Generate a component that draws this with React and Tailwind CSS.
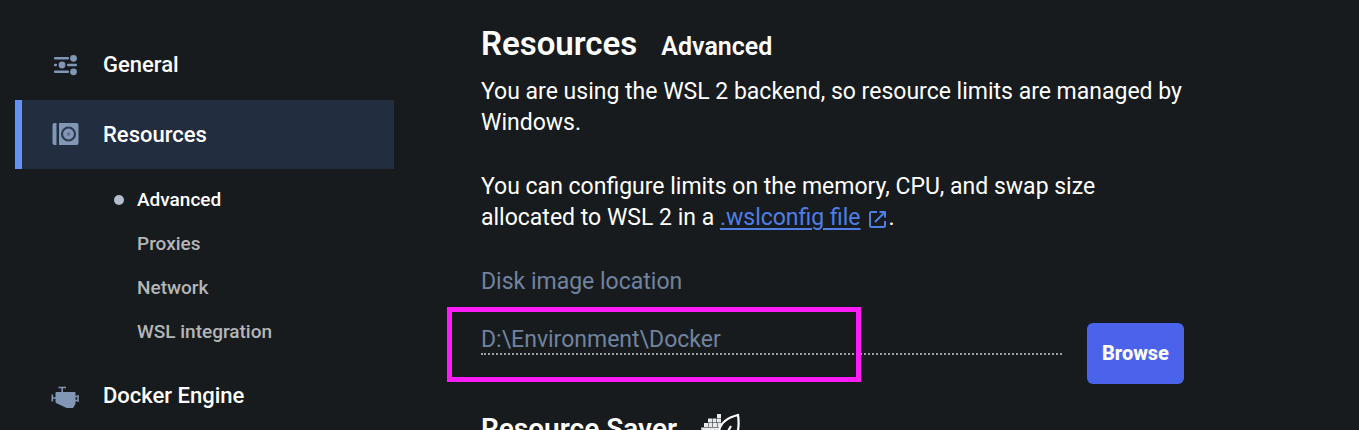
import React from 'react';

const subItems = ['Advanced', 'Proxies', 'Network', 'WSL integration'];

function SlidersIcon() {
  return (
    <svg className="h-7 w-7 shrink-0" viewBox="0 0 28 28" fill="#8297b5" aria-hidden="true">
      <rect x="3" y="6" width="15" height="2.6" rx="1" />
      <rect x="3" y="12.7" width="3" height="2.6" rx="1" />
      <rect x="16" y="12.7" width="10" height="2.6" rx="1" />
      <rect x="3" y="19.5" width="15" height="2.6" rx="1" />
      <circle cx="22.5" cy="7.3" r="3.4" />
      <circle cx="11" cy="14" r="3.4" />
      <circle cx="22.5" cy="20.8" r="3.4" />
    </svg>
  );
}

function DiskIcon() {
  return (
    <svg className="h-7 w-7 shrink-0" viewBox="0 0 28 28" aria-hidden="true">
      <path d="M3.5 2H5.5v22h-2A2 2 0 0 1 1.5 22V4a2 2 0 0 1 2-2Z" fill="#8297b5" />
      <path d="M8 2h17.500a2 2 0 0 1 2 2v18a2 2 0 0 1-2 2H8Z" fill="#8297b5" />
      <circle cx="17.500" cy="13" r="6.500" fill="none" stroke="#2c3b50" strokeWidth="2.200" />
      <circle cx="17.500" cy="13" r="1.800" fill="#5f738f" />
    </svg>
  );
}

function EngineIcon() {
  return (
    <svg className="h-7 w-7 shrink-0" viewBox="0 0 28 28" aria-hidden="true">
      <path d="M5.500 11h18v10.500l-2 3.500h-5.500L5.500 20Z" fill="#8297b5" stroke="#8297b5" strokeWidth="2" strokeLinejoin="round" />
      <path d="M7.500 5.500h7.500M11.200 5.500v5M1.300 12.500v7M1.500 16h4M23 14.500h3M23 18.500h3M27 13v7" fill="none" stroke="#8297b5" strokeWidth="1.600" />
    </svg>
  );
}

function ExternalIcon() {
  return (
    <svg className="ml-2 inline-block h-5 w-5" viewBox="0 0 20 20" fill="none" stroke="#4f7fe6" strokeWidth="2" aria-hidden="true">
      <path d="M9 3H3.500A1.500 1.500 0 0 0 2 4.500v12A1.500 1.500 0 0 0 3.500 18h12a1.500 1.500 0 0 0 1.500-1.500V12M11.500 3H17v5.500M17 3 7 13" />
    </svg>
  );
}

function SaverIcon() {
  return (
    <svg className="h-8 w-10" viewBox="0 0 40 32" aria-hidden="true">
      <g fill="#e8eaec">
        <rect x="16" y="1" width="4" height="4" />
        <rect x="7" y="5.500" width="4" height="4" />
        <rect x="11.500" y="5.500" width="4" height="4" />
        <rect x="16" y="5.500" width="4" height="4" />
        <rect x="3" y="10" width="4" height="4" />
        <rect x="7.500" y="10" width="4" height="4" />
        <rect x="12" y="10" width="4" height="4" />
        <rect x="16.500" y="10" width="4" height="4" />
        <path d="M0 14.500h19v13H9Q2 25 0 14.500Z" />
      </g>
      <path d="M37 2C29 4 19 9 18 19c0 6 4 9 9 9 9 0 12-12 10-26ZM22 27l8-14" fill="#171b1e" stroke="#fff" strokeWidth="2.200" />
    </svg>
  );
}

function NavItem({ icon, label, active }) {
  return (
    <a
      href="#"
      aria-current={active ? 'page' : undefined}
      className={`flex h-[69px] items-center gap-6 border-l-[7px] pl-[29px] text-[22px] font-medium ${
        active ? 'border-[#6491f5] bg-[#222d3f]' : 'border-transparent'
      }`}
    >
      {icon}
      {label}
    </a>
  );
}

function Sidebar() {
  return (
    <nav className="flex w-[379px] shrink-0 flex-col gap-px">
      <NavItem icon={<SlidersIcon />} label="General" />
      <NavItem icon={<DiskIcon />} label="Resources" active />
      <ul className="pt-2 pb-1.5">
        {subItems.map((item, i) => (
          <li key={item}>
            <a
              href="#"
              className={`flex h-11 items-center gap-[13px] pl-[99px] text-[19px] font-medium ${
                i === 0 ? 'text-white' : 'text-[#b4b6b8]'
              }`}
            >
              <span className={`h-[10px] w-[10px] rounded-full ${i === 0 ? 'bg-[#b5bccb]' : ''}`} />
              {item}
            </a>
          </li>
        ))}
      </ul>
      <NavItem icon={<EngineIcon />} label="Docker Engine" />
    </nav>
  );
}

export default function App() {
  return (
    <div className="flex h-screen gap-[87px] overflow-hidden bg-[#171b1e] pl-[15px] pt-[30px] font-['Roboto',sans-serif] text-white">
      <Sidebar />
      <main className="min-w-0 max-w-[703px] flex-1 text-[23px] leading-[31px]">
        <h1 className="flex items-baseline gap-6 text-[33px] font-semibold leading-[28px]">
          Resources
          <span className="text-[25px]">Advanced</span>
        </h1>
        <p className="mt-[15px]">
          You are using the WSL 2 backend, so resource limits are managed by Windows.
        </p>
        <p className="mt-[33px] max-w-[640px]">
          You can configure limits on the memory, CPU, and swap size allocated to WSL 2 in a{' '}
          <a href="#" className="text-[#4f7fe6] underline decoration-2 underline-offset-3">
            .wslconfig file
          </a>
          <ExternalIcon />.
        </p>
        <label htmlFor="location" className="mt-[33px] block text-[#71839f]">
          Disk image location
        </label>
        <div className="mt-[26px] flex items-start gap-[25px]">
          <div className="relative mt-0.5 min-w-0 flex-1">
            <input
              id="location"
              readOnly
              defaultValue="D:\Environment\Docker"
              className="block h-[30px] w-full border-b-2 border-dotted border-[#a0a2a4] bg-transparent leading-7 text-[#71839f] outline-none"
            />
            <div className="pointer-events-none absolute -left-[34px] -top-[18px] h-[75px] w-[414px] border-5 border-[#ff1cf7]" />
          </div>
          <button className="h-[61px] w-[97px] rounded-md bg-[#4b63eb] text-[20px] font-extrabold">Browse</button>
        </div>
        <h2 className="mt-[29px] flex items-center gap-6 text-[28px] font-semibold leading-8">
          Resource Saver
          <SaverIcon />
        </h2>
      </main>
    </div>
  );
}
